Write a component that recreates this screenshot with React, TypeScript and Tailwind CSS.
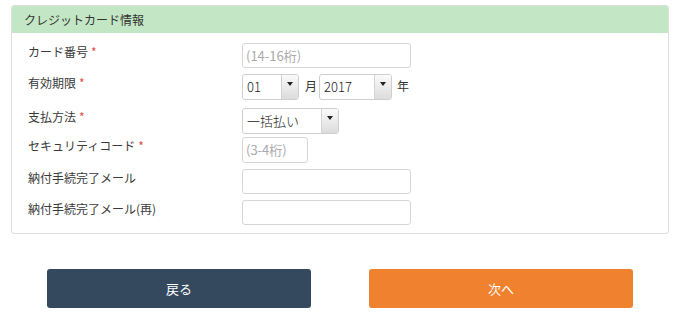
import React from "react";

const font = { fontFamily: '"Noto Sans CJK JP", "Noto Sans", sans-serif' };

function Req() {
  return <span className="text-[#e0504a] ml-[3px]">*</span>;
}

function Label({ children, req }: { children: React.ReactNode; req?: boolean }) {
  return (
    <div className="w-[230px] shrink-0 text-[12px] leading-[16px] text-[#3a3a3a] pl-[16px] mt-[1px]">
      {children}
      {req && <Req />}
    </div>
  );
}

function TextInput({ w, h, placeholder }: { w: string; h: string; placeholder?: string }) {
  return (
    <div
      className={`${w} ${h} border border-[#d6d6d6] rounded-[3px] bg-white flex items-center px-[3px] text-[13px] text-[#aaa]`}
    >
      {placeholder}
    </div>
  );
}

function Select({ w, value }: { w: string; value: string }) {
  return (
    <div className={`${w} h-[26px] border border-[#cfcfcf] rounded-[3px] bg-white flex overflow-hidden`}>
      <div className="flex-1 flex items-center px-[4px] text-[13px] text-[#222] font-light">{value}</div>
      <div className="w-[17px] border-l border-[#d4d4d4] bg-gradient-to-b from-[#fafafa] to-[#dcdcdc] flex justify-center pt-[7px]">
        <svg width="6" height="4" viewBox="0 0 6 4">
          <path d="M0 0 L6 0 L3 4 Z" fill="#222" />
        </svg>
      </div>
    </div>
  );
}

export default function App() {
  return (
    <div className="w-[680px] h-[331px] bg-white relative" style={font}>
      <div className="pt-[5px] px-[11px]">
        <div className="border border-[#dedede] rounded-[3px] overflow-hidden">
          <div className="h-[27px] bg-[#c3e7c4] flex items-center pl-[12px] text-[12px] text-[#333]">
            クレジットカード情報
          </div>
          <div className="pt-[10px] pb-[8px] pl-[0px]">
            <div className="flex items-start h-[25px]">
              <Label req>カード番号</Label>
              <TextInput w="w-[169px]" h="h-[25px]" placeholder="(14-16桁)" />
            </div>
            <div className="flex items-start h-[26px] mt-[6px]">
              <Label req>有効期限</Label>
              <Select w="w-[57px]" value="01" />
              <span className="text-[12px] text-[#333] ml-[6px] mr-[2px] leading-[24px]">月</span>
              <Select w="w-[73px]" value="2017" />
              <span className="text-[12px] text-[#333] ml-[5px] leading-[24px]">年</span>
            </div>
            <div className="flex items-start h-[25px] mt-[8px]">
              <Label req>支払方法</Label>
              <Select w="w-[97px]" value="一括払い" />
            </div>
            <div className="flex items-start h-[26px] mt-[4px]">
              <Label req>セキュリティコード</Label>
              <TextInput w="w-[66px]" h="h-[26px]" placeholder="(3-4桁)" />
            </div>
            <div className="flex items-start h-[25px] mt-[6px]">
              <Label>納付手続完了メール</Label>
              <TextInput w="w-[169px]" h="h-[25px]" />
            </div>
            <div className="flex items-start h-[25px] mt-[6px]">
              <Label>納付手続完了メール(再)</Label>
              <TextInput w="w-[169px]" h="h-[25px]" />
            </div>
          </div>
        </div>
      </div>
      <div className="flex pt-[35px] pl-[47px] gap-[58px]">
        <button className="w-[264px] h-[39px] rounded-[3px] bg-[#34495e] text-white text-[13px]">
          戻る
        </button>
        <button className="w-[264px] h-[39px] rounded-[3px] bg-[#f0812e] text-white text-[13px]">
          次へ
        </button>
      </div>
    </div>
  );
}
